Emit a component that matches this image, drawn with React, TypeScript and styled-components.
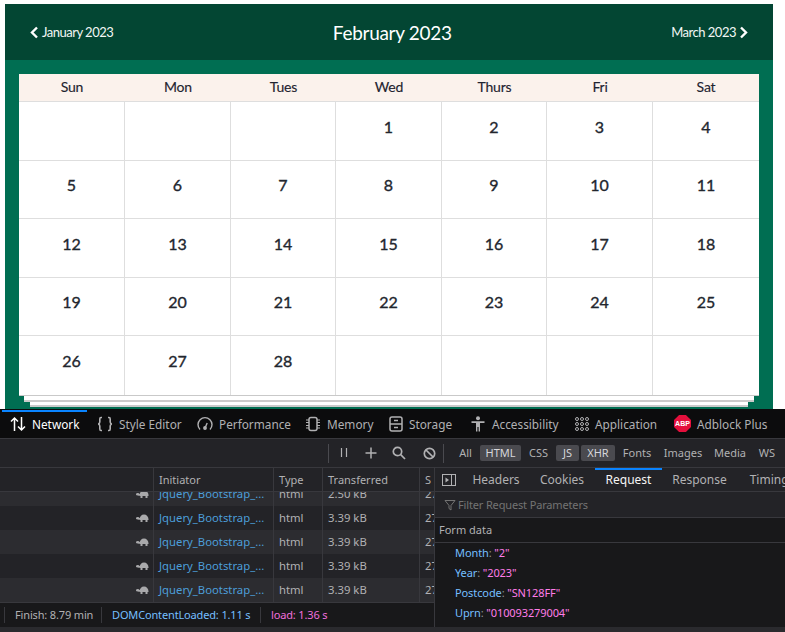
import React from "react";
import styled, { createGlobalStyle } from "styled-components";

const Global = createGlobalStyle`
  html, body { margin: 0; padding: 0; background: #fff; }
  * { box-sizing: border-box; }
  svg { flex: none; }
`;

const DEV = `"Noto Sans", "Open Sans", sans-serif`;
const CAL = `Lato, "Open Sans", sans-serif`;
const COLS = "106px 106px 105px 106px 105px 106px 106px";
const NETCOLS = "153px 120px 49px 97px 15px";

const Page = styled.div`
  width: 785px;
  height: 632px;
  overflow: hidden;
  display: flex;
  flex-direction: column;
  padding-top: 4px;
`;
const Calendar = styled.section`
  width: 768px;
  height: 405px;
  flex: none;
  margin-left: 5px;
  display: flex;
  flex-direction: column;
  font-family: ${CAL};
`;
const CalHeader = styled.header`
  height: 56px;
  flex: none;
  background: #034633;
  color: #fff;
  display: flex;
  align-items: center;
  justify-content: space-between;
  padding: 0 25px;
`;
const MonthLink = styled.a`
  display: flex;
  align-items: center;
  gap: 3px;
  font-size: 13px;
  letter-spacing: -0.5px;
  color: #f2f7f5;
`;
const Title = styled.h1`
  margin: 0;
  font-size: 19px;
  letter-spacing: -0.3px;
  font-weight: 400;
`;
const CalBody = styled.div`
  flex: 1;
  background: #006e52;
  padding: 14px 14px 0;
`;
const Table = styled.div`
  background: #fff;
  color: #1f2430;
`;
const HeadRow = styled.div`
  display: grid;
  grid-template-columns: ${COLS};
  height: 28px;
  background: #fbf2ec;
  border-bottom: 1px solid #dedede;
`;
const HeadCell = styled.div`
  text-align: center;
  font-size: 14px;
  line-height: 26px;
  letter-spacing: -0.2px;
  -webkit-text-stroke: 0.15px #1f2430;
`;
const Grid = styled.div`
  display: grid;
  grid-template-columns: ${COLS};
  grid-template-rows: repeat(5, 58.5px);
  border-bottom: 1px solid #c9c9c9;
`;
const Cell = styled.div<{ $last: boolean; $lastRow: boolean }>`
  border-right: ${(p) => (p.$last ? "none" : "1px solid #dedede")};
  border-bottom: ${(p) => (p.$lastRow ? "none" : "1px solid #dedede")};
  text-align: center;
  font-size: 16px;
  font-weight: 400;
  -webkit-text-stroke: 0.35px #22262e;
  color: #22262e;
  padding-top: 14.6px;
  line-height: 20px;
`;
const Paper = styled.div<{ $inset: number; $h: number }>`
  margin: 0 ${(p) => p.$inset}px;
  height: ${(p) => p.$h}px;
  background: #fff;
  border-bottom: 2px solid #cbcbcb;
`;

const Devtools = styled.section`
  flex: 1;
  min-height: 0;
  background: #232327;
  color: #b1b1b3;
  font-family: ${DEV};
  font-size: 12px;
  display: flex;
  flex-direction: column;
`;
const ToolTabs = styled.nav`
  height: 30px;
  flex: none;
  background: #0c0c0d;
  border-bottom: 1px solid #38383d;
  display: flex;
  align-items: center;
  padding-left: 2px;
`;
const ToolTab = styled.div<{ $active?: boolean; $w: number }>`
  position: relative;
  flex: none;
  width: ${(p) => p.$w}px;
  height: 29px;
  display: flex;
  align-items: center;
  gap: 6px;
  padding-left: 8px;
  font-size: 11.8px;
  white-space: nowrap;
  color: ${(p) => (p.$active ? "#fff" : "#b1b1b3")};
  &::before {
    content: "";
    position: absolute;
    left: 0;
    right: 2px;
    top: 1px;
    height: 2px;
    background: ${(p) => (p.$active ? "#0a84ff" : "transparent")};
  }
`;
const Abp = styled.span`
  width: 17px;
  height: 17px;
  flex: none;
  background: #e40f3c;
  color: #fff;
  clip-path: polygon(30% 0, 70% 0, 100% 30%, 100% 70%, 70% 100%, 30% 100%, 0 70%, 0 30%);
  font: 700 7px "Liberation Sans", sans-serif;
  display: flex;
  align-items: center;
  justify-content: center;
`;
const Toolbar = styled.div`
  height: 29px;
  flex: none;
  background: #232327;
  border-bottom: 1px solid #38383d;
  display: flex;
  align-items: center;
  padding-left: 328px;
`;
const ToolSep = styled.span`
  width: 1px;
  height: 19px;
  flex: none;
  background: #4a4a4f;
`;
const ToolButton = styled.span<{ $w: number }>`
  width: ${(p) => p.$w}px;
  flex: none;
  display: flex;
  justify-content: center;
  align-items: center;
`;
const Filters = styled.div`
  display: flex;
  align-items: center;
  margin-left: 9px;
  gap: 2px;
`;
const Filter = styled.span<{ $on: boolean; $w: number }>`
  flex: none;
  width: ${(p) => p.$w}px;
  height: 16px;
  line-height: 16px;
  text-align: center;
  font-size: 11px;
  border-radius: 2px;
  color: ${(p) => (p.$on ? "#d7d7db" : "#b1b1b3")};
  background: ${(p) => (p.$on ? "#4a4a4f" : "transparent")};
`;
const Panels = styled.div`
  flex: none;
  height: 159px;
  display: flex;
`;
const LeftPanel = styled.div`
  width: 434px;
  flex: none;
  display: flex;
  flex-direction: column;
`;
const ColsRow = styled.div`
  height: 24px;
  flex: none;
  display: grid;
  grid-template-columns: ${NETCOLS};
  background: #232327;
  border-bottom: 1px solid #38383d;
`;
const ColHead = styled.div`
  border-left: 1px solid #38383d;
  padding-left: 5px;
  line-height: 24px;
  font-size: 11px;
  white-space: nowrap;
  overflow: hidden;
  &:first-child { border-left: none; }
`;
const Rows = styled.div`
  height: 111px;
  flex: none;
  display: flex;
  flex-direction: column;
  justify-content: flex-end;
  overflow: hidden;
  border-bottom: 1px solid #38383d;
`;
const Row = styled.div<{ $alt: boolean }>`
  height: 24px;
  flex: none;
  display: grid;
  grid-template-columns: ${NETCOLS};
  background: ${(p) => (p.$alt ? "#2c2c30" : "#232327")};
`;
const RowCell = styled.div<{ $link?: boolean }>`
  border-left: 1px solid #38383d;
  padding-left: 5px;
  line-height: 24px;
  font-size: 11.3px;
  white-space: nowrap;
  overflow: hidden;
  color: ${(p) => (p.$link ? "#4c9ed9" : "#b1b1b3")};
`;
const TurtleCell = styled.div`
  display: flex;
  align-items: center;
  justify-content: flex-end;
  padding-right: 4px;
`;
const Status = styled.div`
  height: 24px;
  flex: none;
  background: #18181a;
  display: flex;
  align-items: center;
  font-size: 11px;
  letter-spacing: -0.15px;
  padding-left: 4px;
`;
const StatusItem = styled.span<{ $w: number; $color: string }>`
  width: ${(p) => p.$w}px;
  flex: none;
  height: 16px;
  line-height: 16px;
  padding-left: 10px;
  border-left: 1px solid #38383d;
  color: ${(p) => p.$color};
  white-space: nowrap;
`;
const RightPanel = styled.div`
  flex: 1;
  min-width: 0;
  background: #18181a;
  border-left: 1px solid #38383d;
  display: flex;
  flex-direction: column;
  overflow: hidden;
`;
const SideTabs = styled.div`
  height: 24px;
  flex: none;
  background: #232327;
  border-bottom: 1px solid #38383d;
  display: flex;
  align-items: center;
  padding-left: 7px;
`;
const SideToggle = styled.span`
  display: flex;
  flex: none;
  margin-right: 7px;
`;
const SideTab = styled.div<{ $active?: boolean; $w: number }>`
  position: relative;
  width: ${(p) => p.$w}px;
  flex: none;
  height: 23px;
  line-height: 23px;
  text-align: center;
  font-size: 12px;
  white-space: nowrap;
  color: ${(p) => (p.$active ? "#f5f5f5" : "#b1b1b3")};
  &::before {
    content: "";
    position: absolute;
    left: 0;
    right: 0;
    top: 0;
    height: 2px;
    background: ${(p) => (p.$active ? "#0a84ff" : "transparent")};
  }
`;
const FilterBar = styled.div`
  height: 26px;
  flex: none;
  background: #232327;
  border-bottom: 1px solid #38383d;
  display: flex;
  align-items: center;
  gap: 2px;
  padding-left: 9px;
  color: #737373;
  font-size: 11px;
  letter-spacing: -0.15px;
`;
const SectionHead = styled.div`
  height: 25px;
  flex: none;
  line-height: 24px;
  padding-left: 4px;
  border-bottom: 1px solid #38383d;
  font-size: 11px;
  color: #b1b1b3;
`;
const Params = styled.div`
  padding: 0 0 0 20px;
`;
const Param = styled.div`
  height: 20px;
  line-height: 20px;
  font-size: 11px;
  letter-spacing: -0.1px;
  white-space: nowrap;
`;
const Key = styled.span`
  color: #75bfff;
`;
const Sep = styled.span`
  color: #939395;
`;
const Val = styled.span`
  color: #ff7de9;
`;
const BottomStrip = styled.div`
  flex: 1;
  background: #2a2a2e;
`;

const Chevron = ({ dir }: { dir: "l" | "r" }) => (
  <svg width="9" height="13" viewBox="0 0 9 13" fill="none">
    <path
      d={dir === "l" ? "M7 1.5 2 6.5l5 5" : "M2 1.5l5 5-5 5"}
      stroke="#fff"
      strokeWidth="2.4"
    />
  </svg>
);

const stroke = { fill: "none", stroke: "#b1b1b3", strokeWidth: 1.2 };

const NetIcon = () => (
  <svg width="16" height="16" viewBox="0 0 16 16" fill="none" stroke="#fff" strokeWidth="1.5">
    <path d="M4.5 15V2M1 5.5 4.5 2 8 5.5M11.5 1v13M8 10.5l3.5 3.5 3.5-3.5" />
  </svg>
);
const BracesIcon = () => (
  <svg width="16" height="16" viewBox="0 0 16 16" {...stroke} strokeWidth={1.6}>
    <path d="M5 1.5H4Q2.8 1.5 2.8 3v3Q2.8 7.6 1.2 8q1.6.4 1.6 2v3q0 1.5 1.2 1.5h1M11 1.5h1q1.2 0 1.2 1.5v3q0 1.6 1.6 2-1.6.4-1.6 2v3q0 1.5-1.2 1.5h-1" />
  </svg>
);
const GaugeIcon = () => (
  <svg width="16" height="16" viewBox="0 0 16 16" {...stroke} strokeWidth={1.4}>
    <path d="M3 13.5A7 7 0 1 1 13 13.5" />
    <path d="M8 12l2.2-5" />
    <circle cx="8" cy="12" r="1.2" fill="#b1b1b3" />
  </svg>
);
const ChipIcon = () => (
  <svg width="16" height="16" viewBox="0 0 16 16" {...stroke}>
    <rect x="4" y="1.5" width="8" height="13" rx="2" strokeWidth="1.5" />
    <path d="M1 4h3M1 6.5h3M1 9.5h3M1 12h3M12 4h3M12 6.5h3M12 9.5h3M12 12h3" />
  </svg>
);
const StorageIcon = () => (
  <svg width="14" height="16" viewBox="0 0 14 16" {...stroke}>
    <rect x="1" y="1" width="12" height="14" rx="2" strokeWidth="1.5" />
    <path d="M1 8h12M5 4.5h4M5 11.5h4" strokeWidth="1.4" />
  </svg>
);
const PersonIcon = () => (
  <svg width="16" height="16" viewBox="0 0 16 16" fill="#b1b1b3">
    <circle cx="8" cy="2.3" r="2" />
    <path d="M1.5 5.2h13v1.8H10v8.5H8.6V11H7.4v4.5H6V7H1.5z" />
  </svg>
);
const GridIcon = () => (
  <svg width="14" height="14" viewBox="0 0 14 14" {...stroke} strokeWidth={1}>
    {[2, 7, 12].flatMap((y) =>
      [2, 7, 12].map((x) => <circle key={`${x}-${y}`} cx={x} cy={y} r="1.5" />)
    )}
  </svg>
);
const PauseIcon = () => (
  <svg width="12" height="12" viewBox="0 0 12 12" {...stroke}>
    <path d="M3.5 1v9M8.5 1v9" />
  </svg>
);
const PlusIcon = () => (
  <svg width="12" height="12" viewBox="0 0 12 12" {...stroke} strokeWidth={1.5}>
    <path d="M6 .5v11M.5 6h11" />
  </svg>
);
const SearchIcon = () => (
  <svg width="14" height="14" viewBox="0 0 14 14" {...stroke} strokeWidth={1.7}>
    <circle cx="5.5" cy="5.5" r="4.2" />
    <path d="M8.7 8.7 13 13" />
  </svg>
);
const BlockIcon = () => (
  <svg width="13" height="13" viewBox="0 0 13 13" {...stroke} strokeWidth={1.7}>
    <circle cx="6.5" cy="6.5" r="5.2" />
    <path d="M3 3l7 7" />
  </svg>
);
const SideIcon = () => (
  <svg width="14" height="12" viewBox="0 0 14 12" {...stroke} strokeWidth={1}>
    <rect x=".5" y=".5" width="13" height="11" />
    <path d="M9.5 .5v11" />
    <path d="M3.5 3.5v5L7 6z" fill="#b1b1b3" stroke="none" />
  </svg>
);
const FunnelIcon = () => (
  <svg width="12" height="12" viewBox="0 0 12 12" fill="none" stroke="#737373" strokeWidth="1">
    <path d="M1 1.5h10L7 6.5v4.5l-2-1.5v-3z" />
  </svg>
);
const Turtle = () => (
  <svg width="13" height="8" viewBox="0 0 13 8" fill="#a9a9ab">
    <path d="M3.5 5.5C3.5 2.5 5.5.5 8 .5s4.5 2 4.5 5v.5h-9z" />
    <ellipse cx="1.7" cy="4.2" rx="1.7" ry="1.3" />
    <path d="M2 4h2v1.5H2zM4.5 6h2v2h-2zM9.5 6h2v2h-2z" />
  </svg>
);

const days = ["Sun", "Mon", "Tues", "Wed", "Thurs", "Fri", "Sat"];
const cells: (number | null)[] = [
  null, null, null,
  ...Array.from({ length: 28 }, (_, i) => i + 1),
  null, null, null, null,
];
const filters: [string, boolean, number][] = [
  ["All", false, 25], ["HTML", true, 41], ["CSS", false, 31], ["JS", true, 23], ["XHR", true, 34],
  ["Fonts", false, 40], ["Images", false, 48], ["Media", false, 42], ["WS", false, 28],
];
const params: [string, string][] = [
  ["Month", '"2"'], ["Year", '"2023"'], ["Postcode", '"SN128FF"'], ["Uprn", '"010093279004"'],
];
const rows = ["2.50 kB", "3.39 kB", "3.39 kB", "3.39 kB", "3.39 kB"];

export default function App() {
  return (
    <Page>
      <Global />
      <Calendar>
        <CalHeader>
          <MonthLink><Chevron dir="l" />January 2023</MonthLink>
          <Title>February 2023</Title>
          <MonthLink>March 2023<Chevron dir="r" /></MonthLink>
        </CalHeader>
        <CalBody>
          <Table>
            <HeadRow>
              {days.map((d) => <HeadCell key={d}>{d}</HeadCell>)}
            </HeadRow>
            <Grid>
              {cells.map((c, i) => (
                <Cell key={i} $last={i % 7 === 6} $lastRow={i >= 28}>{c}</Cell>
              ))}
            </Grid>
          </Table>
          <Paper $inset={5} $h={6} />
          <Paper $inset={11} $h={5} />
        </CalBody>
      </Calendar>
      <Devtools>
        <ToolTabs>
          <ToolTab $active $w={87}><NetIcon />Network</ToolTab>
          <ToolTab $w={100}><BracesIcon />Style Editor</ToolTab>
          <ToolTab $w={108}><GaugeIcon />Performance</ToolTab>
          <ToolTab $w={84}><ChipIcon />Memory</ToolTab>
          <ToolTab $w={81}><StorageIcon />Storage</ToolTab>
          <ToolTab $w={105}><PersonIcon />Accessibility</ToolTab>
          <ToolTab $w={99}><GridIcon />Application</ToolTab>
          <ToolTab $w={110}><Abp>ABP</Abp>Adblock Plus</ToolTab>
        </ToolTabs>
        <Toolbar>
          <ToolSep />
          <ToolButton $w={30}><PauseIcon /></ToolButton>
          <ToolButton $w={24}><PlusIcon /></ToolButton>
          <ToolButton $w={32}><SearchIcon /></ToolButton>
          <ToolButton $w={28}><BlockIcon /></ToolButton>
          <ToolSep />
          <Filters>
            {filters.map(([f, on, w]) => <Filter key={f} $on={on} $w={w}>{f}</Filter>)}
          </Filters>
        </Toolbar>
        <Panels>
          <LeftPanel>
            <ColsRow>
              <ColHead />
              <ColHead>Initiator</ColHead>
              <ColHead>Type</ColHead>
              <ColHead>Transferred</ColHead>
              <ColHead>S</ColHead>
            </ColsRow>
            <Rows>
              {rows.map((size, i) => (
                <Row key={i} $alt={i % 2 === 0}>
                  <TurtleCell><Turtle /></TurtleCell>
                  <RowCell $link>Jquery_Bootstrap_...</RowCell>
                  <RowCell>html</RowCell>
                  <RowCell>{size}</RowCell>
                  <RowCell>27</RowCell>
                </Row>
              ))}
            </Rows>
            <Status>
              <StatusItem $w={97} $color="#b1b1b3">Finish: 8.79 min</StatusItem>
              <StatusItem $w={159} $color="#75bfff">DOMContentLoaded: 1.11 s</StatusItem>
              <StatusItem $w={120} $color="#f06fdc">load: 1.36 s</StatusItem>
            </Status>
          </LeftPanel>
          <RightPanel>
            <SideTabs>
              <SideToggle><SideIcon /></SideToggle>
              <SideTab $w={66}>Headers</SideTab>
              <SideTab $w={66}>Cookies</SideTab>
              <SideTab $active $w={67}>Request</SideTab>
              <SideTab $w={75}>Response</SideTab>
              <SideTab $w={70}>Timings</SideTab>
            </SideTabs>
            <FilterBar><FunnelIcon />Filter Request Parameters</FilterBar>
            <SectionHead>Form data</SectionHead>
            <Params>
              {params.map(([k, v]) => (
                <Param key={k}><Key>{k}</Key><Sep>: </Sep><Val>{v}</Val></Param>
              ))}
            </Params>
          </RightPanel>
        </Panels>
        <BottomStrip />
      </Devtools>
    </Page>
  );
}
